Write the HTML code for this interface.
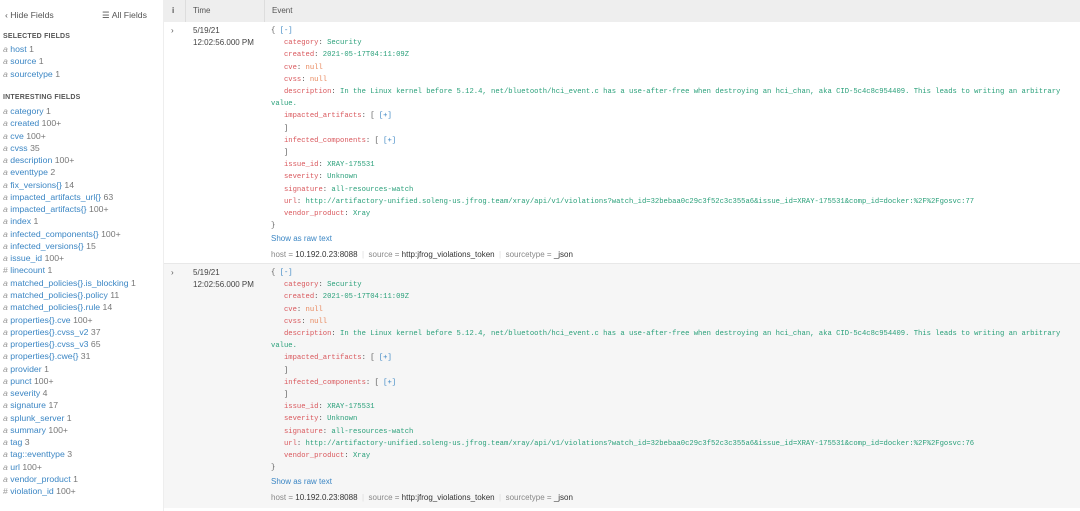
<!DOCTYPE html>
<html><head><meta charset="utf-8"><style>
*{margin:0;padding:0;box-sizing:border-box}
body{width:1080px;height:511px;overflow:hidden;background:#fff;font-family:"Liberation Sans",sans-serif;position:relative;color:#333}
.a{position:absolute;white-space:pre;line-height:12px}
.s{font-size:8px}
.sf{font-size:8.7px}
.m{font-family:"Liberation Mono",monospace;font-size:7.2px;color:#555}
.k{color:#d9575c}.v{color:#2aa07a}.n{color:#e8875b}.b{color:#3b86c4}
.g{color:#999}.f{color:#3b86c4}.c{color:#777}
.h{font-size:7px;color:#555;font-weight:bold;letter-spacing:.2px}
</style></head><body>
<div style="position:absolute;left:163px;top:0;width:917px;height:22px;background:#eeeeee"></div>
<div style="position:absolute;left:185px;top:0;width:1px;height:22px;background:#ddd"></div>
<div style="position:absolute;left:264px;top:0;width:1px;height:22px;background:#ddd"></div>
<div style="position:absolute;left:163px;top:22px;width:917px;height:242px;background:#fff"></div>
<div style="position:absolute;left:163px;top:264px;width:917px;height:244px;background:#f6f6f6"></div>
<div style="position:absolute;left:163px;top:263px;width:917px;height:1px;background:#e8e8e8"></div>
<div style="position:absolute;left:163px;top:0;width:1px;height:511px;background:#eee"></div>

<div class="a sf" style="left:5px;top:9px;color:#555">‹ Hide Fields</div>
<div class="a sf" style="left:102px;top:9px;color:#555">☰ All Fields</div>
<div class="a s" style="left:172px;top:5px;font-weight:bold;color:#555">i</div>
<div class="a s" style="left:193px;top:5px;color:#555">Time</div>
<div class="a s" style="left:272px;top:5px;color:#555">Event</div>

<div class="a h" style="left:3px;top:31px">SELECTED FIELDS</div>
<div class="a h" style="left:3px;top:92px">INTERESTING FIELDS</div>
<div class="a sf" style="left:3px;top:43px;line-height:12.25px"><span class="g"><i>a</i></span> <span class="f">host</span> <span class="c">1</span>
<span class="g"><i>a</i></span> <span class="f">source</span> <span class="c">1</span>
<span class="g"><i>a</i></span> <span class="f">sourcetype</span> <span class="c">1</span></div>
<div class="a sf" style="left:3px;top:105px;line-height:12.26px"><span class="g"><i>a</i></span> <span class="f">category</span> <span class="c">1</span>
<span class="g"><i>a</i></span> <span class="f">created</span> <span class="c">100+</span>
<span class="g"><i>a</i></span> <span class="f">cve</span> <span class="c">100+</span>
<span class="g"><i>a</i></span> <span class="f">cvss</span> <span class="c">35</span>
<span class="g"><i>a</i></span> <span class="f">description</span> <span class="c">100+</span>
<span class="g"><i>a</i></span> <span class="f">eventtype</span> <span class="c">2</span>
<span class="g"><i>a</i></span> <span class="f">fix_versions{}</span> <span class="c">14</span>
<span class="g"><i>a</i></span> <span class="f">impacted_artifacts_url{}</span> <span class="c">63</span>
<span class="g"><i>a</i></span> <span class="f">impacted_artifacts{}</span> <span class="c">100+</span>
<span class="g"><i>a</i></span> <span class="f">index</span> <span class="c">1</span>
<span class="g"><i>a</i></span> <span class="f">infected_components{}</span> <span class="c">100+</span>
<span class="g"><i>a</i></span> <span class="f">infected_versions{}</span> <span class="c">15</span>
<span class="g"><i>a</i></span> <span class="f">issue_id</span> <span class="c">100+</span>
<span class="g">#</span> <span class="f">linecount</span> <span class="c">1</span>
<span class="g"><i>a</i></span> <span class="f">matched_policies{}.is_blocking</span> <span class="c">1</span>
<span class="g"><i>a</i></span> <span class="f">matched_policies{}.policy</span> <span class="c">11</span>
<span class="g"><i>a</i></span> <span class="f">matched_policies{}.rule</span> <span class="c">14</span>
<span class="g"><i>a</i></span> <span class="f">properties{}.cve</span> <span class="c">100+</span>
<span class="g"><i>a</i></span> <span class="f">properties{}.cvss_v2</span> <span class="c">37</span>
<span class="g"><i>a</i></span> <span class="f">properties{}.cvss_v3</span> <span class="c">65</span>
<span class="g"><i>a</i></span> <span class="f">properties{}.cwe{}</span> <span class="c">31</span>
<span class="g"><i>a</i></span> <span class="f">provider</span> <span class="c">1</span>
<span class="g"><i>a</i></span> <span class="f">punct</span> <span class="c">100+</span>
<span class="g"><i>a</i></span> <span class="f">severity</span> <span class="c">4</span>
<span class="g"><i>a</i></span> <span class="f">signature</span> <span class="c">17</span>
<span class="g"><i>a</i></span> <span class="f">splunk_server</span> <span class="c">1</span>
<span class="g"><i>a</i></span> <span class="f">summary</span> <span class="c">100+</span>
<span class="g"><i>a</i></span> <span class="f">tag</span> <span class="c">3</span>
<span class="g"><i>a</i></span> <span class="f">tag::eventtype</span> <span class="c">3</span>
<span class="g"><i>a</i></span> <span class="f">url</span> <span class="c">100+</span>
<span class="g"><i>a</i></span> <span class="f">vendor_product</span> <span class="c">1</span>
<span class="g">#</span> <span class="f">violation_id</span> <span class="c">100+</span></div>

<!-- event 1 -->
<div class="a s" style="left:171px;top:25px;color:#555">›</div>
<div class="a s" style="left:193px;top:25px;color:#444;line-height:12px">5/19/21
12:02:56.000 PM</div>
<div class="a m" style="left:271px;top:25px;line-height:12.2px">{ <span class="b">[-]</span>
   <span class="k">category</span>: <span class="v">Security</span>
   <span class="k">created</span>: <span class="v">2021-05-17T04:11:09Z</span>
   <span class="k">cve</span>: <span class="n">null</span>
   <span class="k">cvss</span>: <span class="n">null</span>
   <span class="k">description</span>: <span class="v">In the Linux kernel before 5.12.4, net/bluetooth/hci_event.c has a use-after-free when destroying an hci_chan, aka CID-5c4c8c954409. This leads to writing an arbitrary</span>
<span class="v">value.</span>
   <span class="k">impacted_artifacts</span>: [ <span class="b">[+]</span>
   ]
   <span class="k">infected_components</span>: [ <span class="b">[+]</span>
   ]
   <span class="k">issue_id</span>: <span class="v">XRAY-175531</span>
   <span class="k">severity</span>: <span class="v">Unknown</span>
   <span class="k">signature</span>: <span class="v">all-resources-watch</span>
   <span class="k">url</span>: <span class="v">http://artifactory-unified.soleng-us.jfrog.team/xray/api/v1/violations?watch_id=32bebaa0c29c3f52c3c355a6&amp;issue_id=XRAY-175531&amp;comp_id=docker:%2F%2Fgosvc:77</span>
   <span class="k">vendor_product</span>: <span class="v">Xray</span>
}</div>
<div class="a s" style="left:271px;top:233px;color:#3b86c4">Show as raw text</div>
<div class="a s" style="left:271px;top:249px;color:#888">host = <span style="color:#333">10.192.0.23:8088</span>  <span style="color:#ddd">|</span>  source = <span style="color:#333">http:jfrog_violations_token</span>  <span style="color:#ddd">|</span>  sourcetype = <span style="color:#333">_json</span></div>

<!-- event 2 -->
<div class="a s" style="left:171px;top:267px;color:#555">›</div>
<div class="a s" style="left:193px;top:267px;color:#444;line-height:12px">5/19/21
12:02:56.000 PM</div>
<div class="a m" style="left:271px;top:267px;line-height:12.2px">{ <span class="b">[-]</span>
   <span class="k">category</span>: <span class="v">Security</span>
   <span class="k">created</span>: <span class="v">2021-05-17T04:11:09Z</span>
   <span class="k">cve</span>: <span class="n">null</span>
   <span class="k">cvss</span>: <span class="n">null</span>
   <span class="k">description</span>: <span class="v">In the Linux kernel before 5.12.4, net/bluetooth/hci_event.c has a use-after-free when destroying an hci_chan, aka CID-5c4c8c954409. This leads to writing an arbitrary</span>
<span class="v">value.</span>
   <span class="k">impacted_artifacts</span>: [ <span class="b">[+]</span>
   ]
   <span class="k">infected_components</span>: [ <span class="b">[+]</span>
   ]
   <span class="k">issue_id</span>: <span class="v">XRAY-175531</span>
   <span class="k">severity</span>: <span class="v">Unknown</span>
   <span class="k">signature</span>: <span class="v">all-resources-watch</span>
   <span class="k">url</span>: <span class="v">http://artifactory-unified.soleng-us.jfrog.team/xray/api/v1/violations?watch_id=32bebaa0c29c3f52c3c355a6&amp;issue_id=XRAY-175531&amp;comp_id=docker:%2F%2Fgosvc:76</span>
   <span class="k">vendor_product</span>: <span class="v">Xray</span>
}</div>
<div class="a s" style="left:271px;top:476px;color:#3b86c4">Show as raw text</div>
<div class="a s" style="left:271px;top:492px;color:#888">host = <span style="color:#333">10.192.0.23:8088</span>  <span style="color:#ddd">|</span>  source = <span style="color:#333">http:jfrog_violations_token</span>  <span style="color:#ddd">|</span>  sourcetype = <span style="color:#333">_json</span></div>
</body></html>
